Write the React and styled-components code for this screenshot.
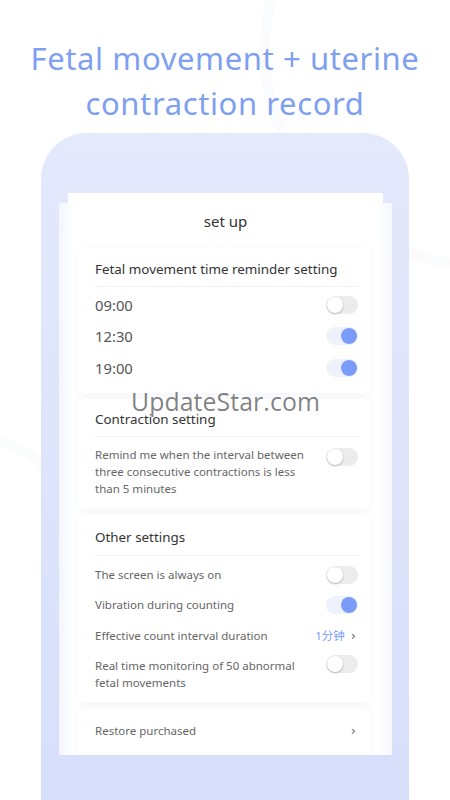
import styled, { createGlobalStyle } from "styled-components";

const GlobalStyle = createGlobalStyle`
  html, body {
    margin: 0;
    padding: 0;
    background: #ffffff;
  }
  body {
    font-family: "Noto Sans", "Noto Sans CJK SC", sans-serif;
    width: 450px;
    height: 800px;
    overflow: hidden;
  }
`;

const Page = styled.div`
  width: 450px;
  height: 800px;
  position: relative;
  overflow: hidden;
  background: #ffffff;
`;

const Swirl = styled.div`
  position: absolute;
  width: 420px;
  height: 420px;
  border-radius: 50%;
  border: 10px solid #fafbfd;
  right: -250px;
  top: -170px;
`;

const Swirl2 = styled(Swirl)`
  left: -300px;
  right: auto;
  top: 420px;
`;

const Title = styled.h1`
  position: relative;
  margin: 0;
  padding-top: 36px;
  text-align: center;
  font-family: "Noto Sans", sans-serif;
  font-weight: 400;
  font-size: 31px;
  line-height: 45px;
  letter-spacing: 0.6px;
  color: #7f9ff0;
`;

const Phone = styled.div`
  position: relative;
  margin: 7px 0 0 41px;
  width: 368px;
  height: 700px;
  border-radius: 46px 46px 20px 20px;
  background: linear-gradient(180deg, #e4e9fc 0%, #dde4fb 50%, #d6defa 100%);
  padding-top: 60px;
  box-sizing: border-box;
`;

const TopStrip = styled.div`
  margin-left: 27px;
  width: 315px;
  height: 10px;
  background: #ffffff;
`;

const Screen = styled.div`
  margin-left: 18px;
  width: 333px;
  height: 552px;
  overflow: hidden;
  background: linear-gradient(90deg, #f3f6fe 0px, #ffffff 14px, #ffffff 318px, #f6f8fe 333px);
  box-sizing: border-box;
`;

const ScreenTitle = styled.div`
  text-align: center;
  font-size: 15px;
  color: #333;
  padding-top: 7px;
  height: 39px;
  line-height: 22px;
`;

const Card = styled.div`
  margin: 0 22px 6px 19px;
  padding: 0 12px 4px 17px;
  background: #ffffff;
  border-radius: 6px;
  box-shadow: 0 2px 10px rgba(200, 210, 235, 0.22);
`;

const CardHeader = styled.div`
  font-size: 13.4px;
  color: #333;
  height: ${(p) => p.$h || 38}px;
  line-height: 20px;
  padding-top: ${(p) => p.$pt || 10}px;
  box-sizing: border-box;
  border-bottom: 1px solid #f1f2f5;
  margin-right: -2px;
`;

const Row = styled.div`
  display: flex;
  align-items: ${(p) => (p.$top ? "flex-start" : "center")};
  justify-content: space-between;
  min-height: ${(p) => p.$h || 32}px;
  padding-top: ${(p) => p.$pt || 0}px;
  box-sizing: border-box;
`;

const TimeLabel = styled.span`
  font-size: 14.8px;
  color: #555;
`;

const Label = styled.span`
  font-size: 11.5px;
  line-height: 17px;
  color: #666;
  max-width: ${(p) => p.$w || 240}px;
`;

const Track = styled.div`
  width: 32px;
  height: 18px;
  border-radius: 9px;
  background: ${(p) => (p.$on ? "#eef2fd" : "#ececec")};
  position: relative;
  flex-shrink: 0;
  margin-top: ${(p) => p.$mt || 0}px;
`;

const Knob = styled.div`
  position: absolute;
  top: 1px;
  left: ${(p) => (p.$on ? "15px" : "1px")};
  width: 16px;
  height: 16px;
  border-radius: 50%;
  background: ${(p) => (p.$on ? "#7b9cf6" : "#ffffff")};
  box-shadow: ${(p) => (p.$on ? "none" : "0 1px 2px rgba(0,0,0,0.25)")};
`;

const Value = styled.span`
  display: flex;
  align-items: center;
  gap: 6px;
  font-size: 11.5px;
  color: #7b9cf6;
  margin-right: 2px;
`;

const Chevron = styled.span`
  color: #666;
  font-size: 13px;
  font-family: "DejaVu Sans", sans-serif;
`;

const Watermark = styled.div`
  position: absolute;
  left: 131px;
  top: 384px;
  font-family: "Open Sans", "Noto Sans", sans-serif;
  font-size: 24.8px;
  color: rgba(95, 95, 95, 0.78);
  letter-spacing: 0.1px;
`;

function Toggle({ on, mt }) {
  return (
    <Track $on={on} $mt={mt}>
      <Knob $on={on} />
    </Track>
  );
}

export default function App() {
  return (
    <Page>
      <GlobalStyle />
      <Swirl />
      <Swirl2 />
      <Title>
        Fetal movement + uterine
        <br />
        contraction record
      </Title>
      <Phone>
        <TopStrip />
        <Screen>
          <ScreenTitle>set up</ScreenTitle>

          <Card>
            <CardHeader>Fetal movement time reminder setting</CardHeader>
            <Row $h={33} $pt={3}>
              <TimeLabel>09:00</TimeLabel>
              <Toggle />
            </Row>
            <Row>
              <TimeLabel>12:30</TimeLabel>
              <Toggle on />
            </Row>
            <Row>
              <TimeLabel>19:00</TimeLabel>
              <Toggle on />
            </Row>
            <Row $h={5} />
          </Card>

          <Card>
            <CardHeader>Contraction setting</CardHeader>
            <Row $top $pt={9} $h={68}>
              <Label $w={220}>
                Remind me when the interval between three consecutive contractions is less than 5 minutes
              </Label>
              <Toggle mt={2} />
            </Row>
          </Card>

          <Card>
            <CardHeader $pt={12} $h={41}>Other settings</CardHeader>
            <Row $h={33} $pt={4}>
              <Label>The screen is always on</Label>
              <Toggle />
            </Row>
            <Row $h={31}>
              <Label>Vibration during counting</Label>
              <Toggle on />
            </Row>
            <Row $h={30}>
              <Label>Effective count interval duration</Label>
              <Value>
                1分钟 <Chevron>›</Chevron>
              </Value>
            </Row>
            <Row $top $h={48} $pt={7}>
              <Label $w={210}>Real time monitoring of 50 abnormal fetal movements</Label>
              <Toggle mt={-2} />
            </Row>
          </Card>

          <Card>
            <Row $h={44}>
              <Label>Restore purchased</Label>
              <Value>
                <Chevron>›</Chevron>
              </Value>
            </Row>
          </Card>
        </Screen>
      </Phone>
      <Watermark>UpdateStar.com</Watermark>
    </Page>
  );
}
